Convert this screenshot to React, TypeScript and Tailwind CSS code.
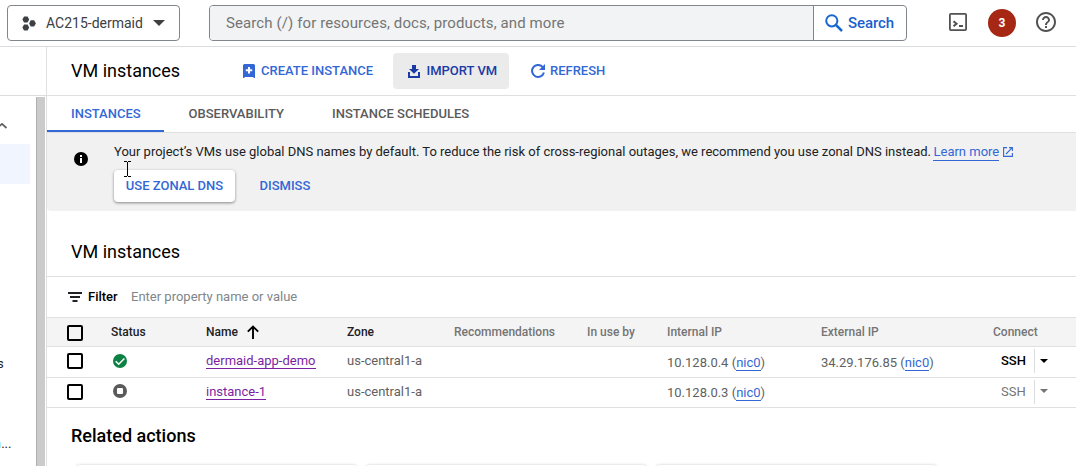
import type { ReactNode } from "react";

function ProjectIcon() {
  return (
    <svg className="shrink-0" width="14" height="15" viewBox="0 0 14 15" fill="#3c4043">
      <path d="M2 .5h3.600L7.200 3.500 5.600 6.500H2L.4 3.500z" />
      <path d="M2 8.500h3.600L7.200 11.500 5.600 14.500H2L.4 11.500z" />
      <path d="M8.700 4.300h3.400L13.900 7.400 12.100 10.500H8.700L7.100 7.400z" />
    </svg>
  );
}

function SearchIcon() {
  return (
    <svg className="shrink-0" width="18" height="18" viewBox="0 0 18 18" fill="none" stroke="#1967d2" strokeWidth="2">
      <circle cx="6.800" cy="6.800" r="5.600" />
      <path d="M11 11l6 6" strokeWidth="2.500" />
    </svg>
  );
}

function ShellIcon() {
  return (
    <svg className="shrink-0" width="18" height="18" viewBox="0 0 18 18" fill="none" stroke="#525252">
      <rect x=".9" y=".9" width="16.200" height="16.200" rx="1" strokeWidth="1.800" />
      <path d="M4.500 8.300l3 2.500-3 2.500" strokeWidth="2.100" />
      <path d="M10 13H14" strokeWidth="2" />
    </svg>
  );
}

function HelpIcon() {
  return (
    <svg className="shrink-0" width="24" height="24" viewBox="0 0 24 24" fill="#525252">
      <path d="M11 18h2v-2h-2v2zm1-16C6.480 2 2 6.480 2 12s4.480 10 10 10 10-4.480 10-10S17.520 2 12 2zm0 18c-4.410 0-8-3.590-8-8s3.590-8 8-8 8 3.590 8 8-3.590 8-8 8zm0-14c-2.210 0-4 1.790-4 4h2c0-1.100.9-2 2-2s2 .9 2 2c0 2-3 1.750-3 5h2c0-2.250 3-2.500 3-5 0-2.210-1.790-4-4-4z" />
    </svg>
  );
}

function CreateIcon() {
  return (
    <svg className="shrink-0" width="12" height="14" viewBox="0 0 12 14">
      <path d="M1.500 0h9Q12 0 12 1.500V14H10.500V13H1.500V14H0V1.500Q0 0 1.500 0z" fill="#3367d6" />
      <path d="M6 3v6.400M2.800 6.200h6.400" stroke="#fff" strokeWidth="2" />
    </svg>
  );
}

function ImportIcon() {
  return (
    <svg className="shrink-0" width="12" height="13" viewBox="0 0 12 13" fill="#1a3aa6">
      <path d="M4 0h4v4h3L6 8.800 1 4h3z" />
      <path d="M0 7h2v4h8V7h2v6H0z" />
    </svg>
  );
}

function RefreshIcon() {
  return (
    <svg className="shrink-0" width="14" height="14" viewBox="0 0 14 14">
      <path d="M11.700 3.100A6 6 0 1 0 12.900 8.500" fill="none" stroke="#3367d6" strokeWidth="2" />
      <path d="M14 0v6H8z" fill="#3367d6" />
    </svg>
  );
}

function InfoIcon() {
  return (
    <svg className="shrink-0" width="14" height="14" viewBox="0 0 14 14">
      <circle cx="7" cy="7" r="7" fill="#000" />
      <path d="M6 3h2v2H6zM6 6h2v5H6z" fill="#fff" />
    </svg>
  );
}

function ExternalIcon() {
  return (
    <svg className="shrink-0" width="10" height="10" viewBox="0 0 10 10" fill="none" stroke="#3367d6" strokeWidth="1.100">
      <path d="M4 .6H.6v8.800h8.800V6" />
      <path d="M6 .6h3.400V4M9.300.7L3 7" />
    </svg>
  );
}

function FilterIcon() {
  return (
    <svg className="shrink-0" width="14" height="10" viewBox="0 0 14 10" fill="#202124">
      <path d="M0 0h14v2H0zM2 4h10v2H2zM4.500 8h5v2h-5z" />
    </svg>
  );
}

function SortIcon() {
  return (
    <svg className="shrink-0" width="12" height="14" viewBox="0 0 12 14" fill="none" stroke="#000" strokeWidth="1.900">
      <path d="M6 14V1.500M.8 6.700L6 1.500l5.200 5.200" />
    </svg>
  );
}

function RunningIcon() {
  return (
    <svg width="14" height="14" viewBox="0 0 14 14">
      <circle cx="7" cy="7" r="7" fill="#0d8043" />
      <path d="M2.700 7.200l3 3 5.700-5.700" fill="none" stroke="#fff" strokeWidth="1.500" />
    </svg>
  );
}

function StoppedIcon() {
  return (
    <svg width="14" height="14" viewBox="0 0 14 14">
      <circle cx="7" cy="7" r="7" fill="#5a5a5a" />
      <rect x="4" y="4" width="6" height="6" rx="1" fill="#fff" />
    </svg>
  );
}

function Caret({ className }: { className: string }) {
  return (
    <svg className={className} viewBox="0 0 10 5" preserveAspectRatio="none" fill="currentColor">
      <path d="M0 0h10L5 5z" />
    </svg>
  );
}

function Checkbox() {
  return <span className="block size-4 rounded-[2px] border-2 border-black" />;
}

function Nic({ ip }: { ip: string }) {
  return (
    <div className="whitespace-nowrap text-[13px] leading-4 text-[#616161]">
      {ip} (<a className="inline-block border-b border-[#3367d6] leading-[15px] text-[#3367d6]">nic0</a>)
    </div>
  );
}

const COLUMNS = "grid grid-cols-[44px_95px_141px_107px_133px_80px_154px_172px_83px] pl-5";

type Row = { name: string; status: ReactNode; internal: string; external?: string; active: boolean };

const rows: Row[] = [
  { name: "dermaid-app-demo", status: <RunningIcon />, internal: "10.128.0.4", external: "34.29.176.85", active: true },
  { name: "instance-1", status: <StoppedIcon />, internal: "10.128.0.3", active: false },
];

function InstanceRow({ row }: { row: Row }) {
  const ipPad = row.active ? "pt-2" : "pt-[7px]";
  return (
    <div className={`${COLUMNS} shrink-0 border-b border-[#e0e0e0] ${row.active ? "h-[31px]" : "h-[30px]"}`}>
      <div className="pt-1.5"><Checkbox /></div>
      <div className={row.active ? "pl-0.5 pt-[7px]" : "pl-0.5 pt-1.5"}>{row.status}</div>
      <div className="pt-1.5 text-[13px] leading-4">
        <a className="inline-block whitespace-nowrap border-b border-[#7b1fa2] leading-[15px] text-[#7b1fa2]">{row.name}</a>
      </div>
      <div className="whitespace-nowrap pt-1.5 text-[13px] leading-4 text-[#616161]">us-central1-a</div>
      <div />
      <div />
      <div className={ipPad}><Nic ip={row.internal} /></div>
      <div className={ipPad}>{row.external && <Nic ip={row.external} />}</div>
      <div className={`flex items-start pl-2 pt-[2px] ${row.active ? "text-black" : "text-[#757575]"}`}>
        <span className={`w-[33px] pt-1 text-[13px] leading-4 ${row.active ? "font-medium" : ""}`}>SSH</span>
        <span className="h-6 w-px bg-[#dadce0]" />
        <Caret className={row.active ? "ml-[5px] mt-[10px] h-1 w-2" : "ml-[5px] mt-[9px] h-1 w-2"} />
      </div>
    </div>
  );
}

function TopBar() {
  return (
    <header className="flex h-[47px] shrink-0 items-start border-b border-[#dadce0] pl-[7px] pt-[5px]">
      <div className="flex h-9 w-[173px] items-center rounded-[4px] border border-[#80868b] pl-3.5">
        <ProjectIcon />
        <span className="ml-[10px] w-[107px] whitespace-nowrap text-[14px] text-[#3c4043]">AC215-dermaid</span>
        <Caret className="h-[6px] w-3 text-[#3c4043]" />
      </div>
      <div className="ml-[29px] flex h-9 w-[698px] overflow-hidden rounded-[4px] border border-[#80868b]">
        <div className="flex w-[604px] items-center border-r border-[#80868b] bg-[#f1f3f4] pl-4 text-[15px] tracking-[0.1px] text-[#757575]">
          Search (/) for resources, docs, products, and more
        </div>
        <div className="flex items-center pl-[11px] text-[15px] font-medium text-[#1a5fd0]">
          <SearchIcon />
          <span className="ml-[5px] tracking-[-0.1px]">Search</span>
        </div>
      </div>
      <div className="ml-[42px] mt-2"><ShellIcon /></div>
      <div className="ml-[21px] mt-1 flex size-7 items-center justify-center rounded-full bg-[#a52714] text-[12px] font-bold text-white">3</div>
      <div className="ml-[18px] mt-[5px]"><HelpIcon /></div>
    </header>
  );
}

function Sidebar() {
  return (
    <aside className="flex w-[47px] shrink-0 flex-col border-r border-[#e0e0e0]">
      <div className="h-[49px] shrink-0 border-b border-[#dadce0]" />
      <div className="flex min-h-0 flex-1 pt-px">
        <div className="w-9 overflow-hidden text-[13px] leading-4 text-[#202124]">
          <svg className="mt-[26px]" width="8" height="6" viewBox="0 0 8 6" fill="none" stroke="#616161" strokeWidth="1.800">
            <path d="M-3 5L2 .9 6.500 5" />
          </svg>
          <div className="mt-[15px] h-10 w-[30px] bg-[#f0f5ff]" />
          <div className="-ml-[3px] mt-[172px]">s</div>
          <div className="-ml-[6px] mt-[64px]"><span className="text-[#8bd3f5]">n</span>...</div>
        </div>
        <div className="w-[9px] border-l border-[#b0b0b0] bg-[#cbcbcb]" />
      </div>
    </aside>
  );
}

export default function App() {
  return (
    <div className="flex h-[466px] w-[1076px] flex-col overflow-hidden bg-white font-[Roboto,'Liberation_Sans',sans-serif] text-black">
      <TopBar />
      <div className="flex min-h-0 flex-1">
        <Sidebar />
        <main className="flex min-w-0 flex-1 flex-col">
          <div className="flex h-[49px] shrink-0 items-center border-b border-[#e0e0e0] pl-6 text-[13px] font-medium text-[#3367d6]">
            <h1 className="w-[172px] pb-0.5 text-[18px] font-normal text-black">VM instances</h1>
            <CreateIcon />
            <span className="ml-[6px] w-[132px] whitespace-nowrap">CREATE INSTANCE</span>
            <div className="flex h-9 w-[116px] items-center rounded-[4px] bg-[#ebebeb] pl-[15px] text-[#1a3aa6]">
              <ImportIcon />
              <span className="ml-[6.500px]">IMPORT VM</span>
            </div>
            <div className="ml-[22px] flex items-center">
              <RefreshIcon />
              <span className="ml-[5px]">REFRESH</span>
            </div>
          </div>

          <nav className="flex h-[37px] shrink-0 border-b border-[#e0e0e0] text-[13px] font-medium leading-[35px] text-[#5a5a5a]">
            <div className="w-[117px] border-b-2 border-[#3367d6] pl-6 text-[#3367d6]">INSTANCES</div>
            <div className="w-[143px] pl-[24.500px]">OBSERVABILITY</div>
            <div className="pl-[25px]">INSTANCE SCHEDULES</div>
          </nav>

          <section className="relative flex h-[78px] shrink-0 rounded-bl-[4px] bg-[#f1f1f1] pl-[27px]">
            <div className="w-10 pt-[19px]"><InfoIcon /></div>
            <div className="pt-[11px]">
              <p className="flex items-start whitespace-nowrap text-[13px] leading-4 text-[#202124]">
                Your project’s VMs use global DNS names by default. To reduce the risk of cross-regional outages, we recommend you use zonal DNS instead.
                <a className="ml-[2.500px] border-b border-[#3367d6] text-[#3367d6]">Learn more</a>
                <span className="ml-[3.500px] pt-[3px]"><ExternalIcon /></span>
              </p>
              <div className="mt-[9px] flex items-center text-[13px] font-medium text-[#3367d6]">
                <button className="h-8 w-[121px] rounded-[4px] bg-white shadow-[0_1px_3px_rgba(0,0,0,0.45)]">USE ZONAL DNS</button>
                <button className="ml-[24.500px]">DISMISS</button>
              </div>
            </div>
            <svg className="absolute left-[77px] top-7" width="7" height="16" viewBox="0 0 7 16" fill="none" stroke="#000">
              <path d="M0 .5h3M4 .5h3M3.500 1v14M0 15.500h3M4 15.500h3" />
            </svg>
          </section>

          <h2 className="flex h-[66px] shrink-0 items-center border-b border-[#e0e0e0] pl-6 pt-4 text-[18px]">VM instances</h2>

          <div className="flex h-[41px] shrink-0 items-center border-b border-[#e0e0e0] pl-[21px] text-[13px]">
            <FilterIcon />
            <span className="ml-[6px] w-[43px] font-medium">Filter</span>
            <span className="text-[#80868b]">Enter property name or value</span>
          </div>

          <div className={`${COLUMNS} h-[29px] shrink-0 items-center whitespace-nowrap border-b border-[#e0e0e0] bg-[#f4f4f4] text-[12px] font-medium text-[#757575]`}>
            <div className="pt-[2px]"><Checkbox /></div>
            <div className="text-[#202124]">Status</div>
            <div className="flex items-center text-[#202124]">
              <span className="w-[41px]">Name</span>
              <SortIcon />
            </div>
            <div className="text-[#202124]">Zone</div>
            <div>Recommendations</div>
            <div>In use by</div>
            <div>Internal IP</div>
            <div>External IP</div>
            <div>Connect</div>
          </div>
          {rows.map((row) => <InstanceRow key={row.name} row={row} />)}

          <h2 className="h-[57px] shrink-0 pl-6 pt-4 text-[18px] font-medium leading-6">Related actions</h2>
          <div className="flex shrink-0 gap-[9px] pl-[29px]">
            <div className="h-10 w-[281px] rounded-[4px] shadow-[0_0_3px_rgba(0,0,0,0.22)]" />
            <div className="h-10 w-[281px] rounded-[4px] shadow-[0_0_3px_rgba(0,0,0,0.22)]" />
            <div className="h-10 w-[281px] rounded-[4px] shadow-[0_0_3px_rgba(0,0,0,0.22)]" />
          </div>
        </main>
      </div>
    </div>
  );
}
